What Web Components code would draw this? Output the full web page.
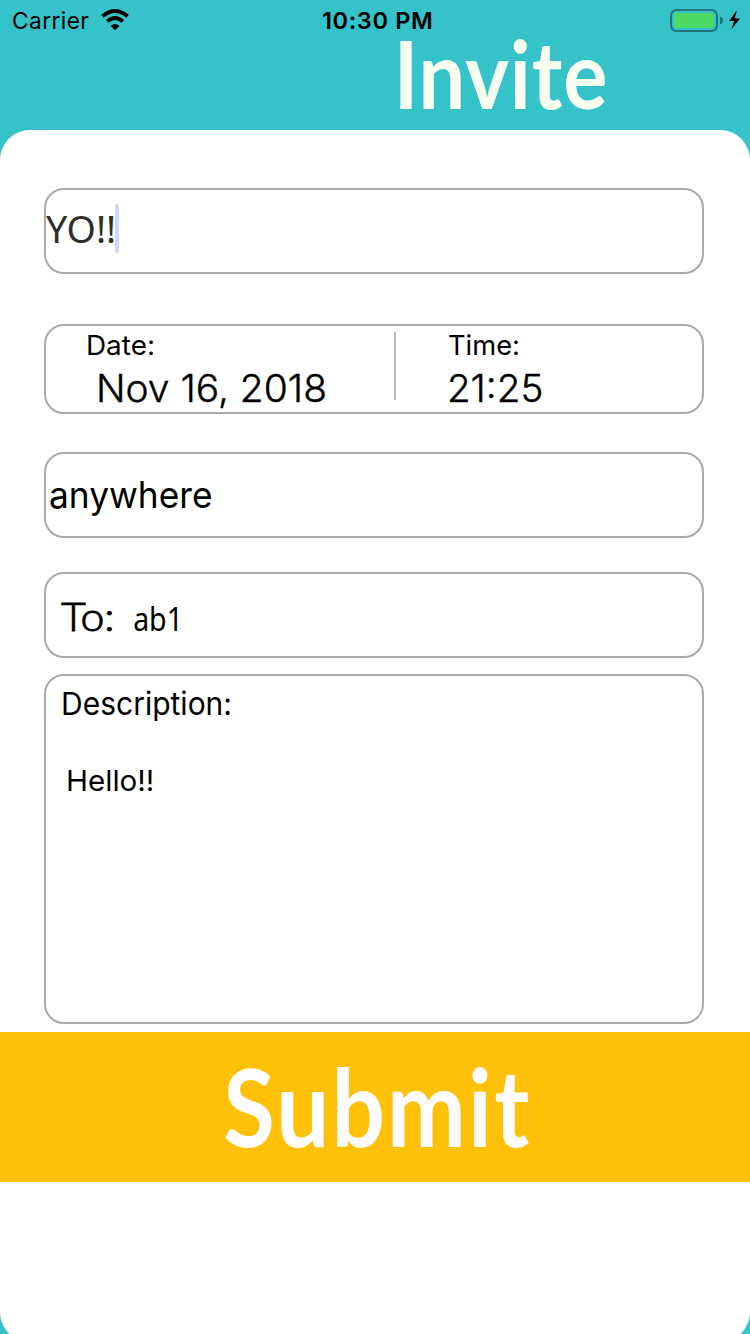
<!DOCTYPE html>
<html lang="en">
<head>
<meta charset="utf-8">
<title>Invite</title>
<style>
html, body { margin: 0; height: 100%; overflow: hidden; background: #35c3c9; }
body { font-family: Inter, "Liberation Sans", sans-serif; color: #000; }
</style>
</head>
<body>
<invite-screen></invite-screen>
<script>
// A single line of type, set to a given ink width with its baseline at a given depth.
class TypeLine extends HTMLElement {
  connectedCallback() {
    const size = +this.getAttribute('size');
    const weight = this.getAttribute('weight') || '400';
    const face = this.getAttribute('face') || 'Inter';
    const ink = +this.getAttribute('ink');
    const base = +this.getAttribute('base');
    const track = +(this.getAttribute('track') || 0);
    const text = this.textContent;
    const font = `${weight} ${size}px "${face}", "Liberation Sans", sans-serif`;
    const ctx = document.createElement('canvas').getContext('2d');
    ctx.font = font;
    ctx.letterSpacing = track + 'px';
    const m = ctx.measureText(text);
    const natural = m.actualBoundingBoxLeft + m.actualBoundingBoxRight;
    const sx = ink / natural;
    const lh = 2 * base - (m.fontBoundingBoxAscent - m.fontBoundingBoxDescent);
    const root = this.attachShadow({ mode: 'open' });
    root.innerHTML = `<style>
      :host { display: block; width: ${ink}px; height: ${lh}px; white-space: nowrap; flex: none; }
      span { display: block; width: max-content; font: ${font}; line-height: ${lh}px; letter-spacing: ${track}px;
        transform-origin: 0 0; transform: translateX(${m.actualBoundingBoxLeft * sx}px) scaleX(${sx}); }
    </style><span><slot></slot></span>`;
  }
}

class StatusBar extends HTMLElement {
  constructor() {
    super();
    this.attachShadow({ mode: 'open' }).innerHTML = `<style>
      :host { display: grid; grid-template-columns: 1fr auto 1fr; height: 40px; padding: 0 9px 0 13px; box-sizing: border-box; }
      .left { display: flex; gap: 12px; }
      .wifi { margin-top: 9px; }
      .power { display: flex; justify-content: flex-end; padding-top: 8px; }
      svg { display: block; flex: none; }
    </style>
    <div class="left">
      <type-line size="23.5" ink="76" base="29" track="0.4">Carrier</type-line>
      <svg class="wifi" width="28" height="22" viewBox="0 0 28 22">
        <g fill="none" stroke="#000" stroke-width="3.8">
          <path d="M1.4 7.2Q14-3.2 26.6 7.2"/>
          <path d="M6.2 12.4Q14 5.4 21.8 12.4"/>
        </g>
        <path d="M14 21.2L9.7 17Q14 12.8 18.3 17Z"/>
      </svg>
    </div>
    <type-line size="23.5" weight="600" ink="108" base="29" track="0.6">10:30 PM</type-line>
    <div class="power">
      <svg width="71" height="24" viewBox="0 0 71 24">
        <rect x="1" y="2" width="46" height="21" rx="5.5" fill="none" stroke="#20767b" stroke-width="2"/>
        <rect x="4" y="5" width="40" height="15" rx="2" fill="#4cd964"/>
        <path d="M50 8.6Q53 9.6 53 12.5T50 16.6Z" fill="#20767b"/>
        <path d="M66.8 2.2L59 13H64.2L61.4 21.6L70 10.4H64.8Z" fill="#000"/>
      </svg>
    </div>`;
  }
}

class FieldBox extends HTMLElement {
  constructor() {
    super();
    this.attachShadow({ mode: 'open' }).innerHTML = `<style>
      :host { display: flex; box-sizing: border-box; border: 2px solid #aaa; border-radius: 20px; background: #fff; }
    </style><slot></slot>`;
  }
}

class SubmitBar extends HTMLElement {
  constructor() {
    super();
    this.attachShadow({ mode: 'open' }).innerHTML = `<style>
      :host { display: block; height: 150px; box-sizing: border-box; padding-left: 225px; background: #ffc107; color: #fffdff; }
    </style><slot></slot>`;
  }
}

class InviteScreen extends HTMLElement {
  constructor() {
    super();
    this.attachShadow({ mode: 'open' }).innerHTML = `<style>
      :host { display: flex; flex-direction: column; width: 750px; height: 1342px; background: #35c3c9; }
      header { height: 90px; padding-left: 400px; color: #f8fff0; flex: none; }
      main { flex: 1; background: #fff; border-radius: 30px; padding-top: 58px; }
      form { display: flex; flex-direction: column; margin: 0 46px 8px 44px; }
      .name { height: 86px; color: #2e2e2b; margin-bottom: 50px; }
      .caret { width: 4px; height: 49px; border-radius: 2px; background: #ccd8ff; margin: 14px 0 0 0; }
      .name type-line { margin-right: 1px; }
      .when { height: 90px; margin-bottom: 38px; }
      .date { width: 348px; display: flex; flex-direction: column; }
      .date type-line:first-child { margin-left: 42px; }
      .date type-line:last-child { margin-left: 53px; }
      .date type-line:last-child, .time type-line:last-child { -webkit-text-stroke: 0.4px #000; }
      .rule { width: 2px; height: 68px; margin-top: 6px; background: #bbb; }
      .time { padding-left: 53px; }
      .time type-line:last-child { margin-left: 1px; }
      .place { height: 86px; padding-left: 4px; margin-bottom: 34px; }
      .to { height: 86px; padding-left: 15px; gap: 22px; margin-bottom: 16px; }
      .to type-line:first-child { -webkit-text-stroke: 0.9px #000; }
      .about { height: 350px; flex-direction: column; padding-left: 17px; }
      .about type-line:last-child { margin-left: 5px; }
    </style>
    <status-bar></status-bar>
    <header><type-line size="93" weight="700" face="Lato" ink="205" base="69" track="1">Invite</type-line></header>
    <main>
      <form>
        <field-box class="name">
          <type-line size="38" face="Noto Sans" ink="68" base="53">YO!!</type-line>
          <div class="caret"></div>
        </field-box>
        <field-box class="when">
          <div class="date">
            <type-line size="27.5" ink="65" base="29">Date:</type-line>
            <type-line size="37.5" weight="300" ink="226" base="38">Nov 16, 2018</type-line>
          </div>
          <div class="rule"></div>
          <div class="time">
            <type-line size="27.5" ink="69" base="29">Time:</type-line>
            <type-line size="37.5" weight="300" ink="91" base="38">21:25</type-line>
          </div>
        </field-box>
        <field-box class="place"><type-line size="37" ink="161" base="54">anywhere</type-line></field-box>
        <field-box class="to">
          <type-line size="39" weight="300" face="Lato" ink="51" base="57">To:</type-line>
          <type-line size="33" face="Noto Sans" ink="43" base="57">ab1</type-line>
        </field-box>
        <field-box class="about">
          <type-line size="31.5" ink="167" base="39.5">Description:</type-line>
          <type-line size="29" ink="85" base="59">Hello!!</type-line>
        </field-box>
      </form>
      <submit-bar><type-line size="108" weight="700" face="Lato" ink="304" base="115" track="2.5">Submit</type-line></submit-bar>
    </main>`;
  }
}
customElements.define('type-line', TypeLine);
customElements.define('status-bar', StatusBar);
customElements.define('field-box', FieldBox);
customElements.define('submit-bar', SubmitBar);
customElements.define('invite-screen', InviteScreen);
</script>
</body>
</html>
